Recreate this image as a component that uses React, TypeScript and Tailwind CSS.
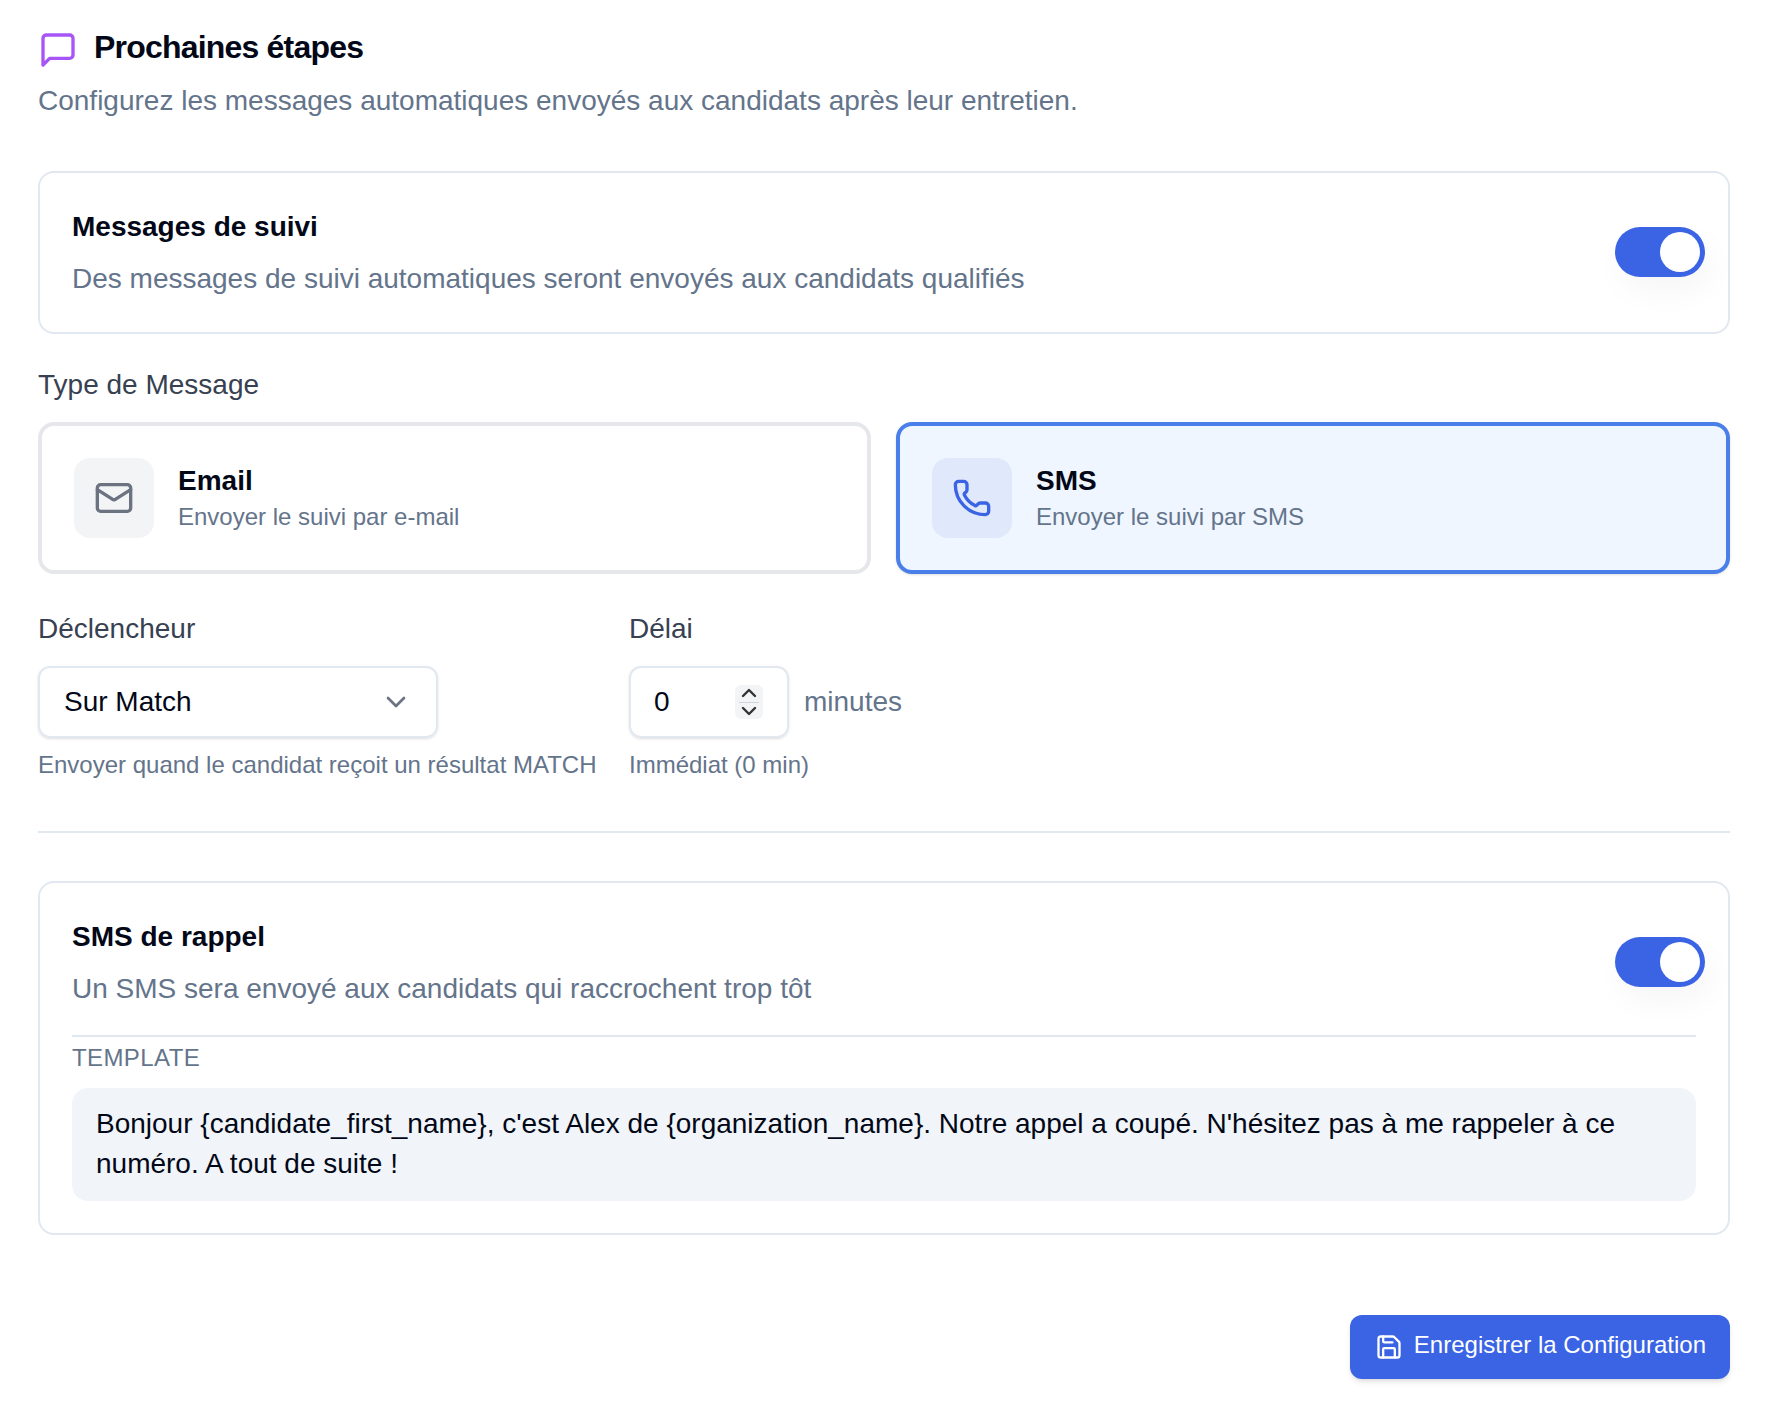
import { ChevronDown, ChevronUp, Mail, Phone, Save } from "lucide-react";

const Toggle = () => (
  <div className="flex h-[50px] w-[90px] -mr-[9px] shrink-0 items-center justify-end rounded-full bg-[#3b64e4] pr-[5px] shadow-[6px_14px_32px_rgba(0,0,0,0.04)]">
    <div className="h-[40px] w-[40px] rounded-full bg-white" />
  </div>
);

const App = () => {
  return (
    <div className="min-h-[1412px] bg-white pl-[38px] pr-[36px] pt-[27px] font-['Liberation_Sans',sans-serif] text-[#020817]">
      <div className="flex h-[40px] items-center gap-[16px]">
        <svg width="40" height="40" viewBox="0 0 24 24" fill="none" stroke="currentColor" strokeWidth="2" strokeLinecap="round" strokeLinejoin="round" className="mt-[6px] shrink-0 text-[#a855f7]">
          <path d="M21 15a2 2 0 0 1-2 2H7l-4 4V5a2 2 0 0 1 2-2h14a2 2 0 0 1 2 2z" />
        </svg>
        <h2 className="text-[32px] font-bold tracking-[-0.8px]">Prochaines étapes</h2>
      </div>
      <p className="mt-[14px] text-[28px] leading-[40px] text-[#64748b]">
        Configurez les messages automatiques envoyés aux candidats après leur entretien.
      </p>

      <div className="mt-[50px] flex items-center justify-between rounded-[16px] border-2 border-[#e2e8f0] px-[32px] pb-[33px] pt-[32px]">
        <div>
          <h3 className="text-[28px] font-bold leading-[44px]">Messages de suivi</h3>
          <p className="mt-[10px] text-[28px] leading-[40px] text-[#64748b]">
            Des messages de suivi automatiques seront envoyés aux candidats qualifiés
          </p>
        </div>
        <Toggle />
      </div>

      <div className="mt-[31px] text-[28px] leading-[40px] text-[#374151]">Type de Message</div>
      <div className="mt-[17px] grid grid-cols-[833px_1fr] gap-[25px]">
        <div className="flex items-center gap-[24px] rounded-[16px] border-4 border-[#e5e7eb] p-[32px]">
          <div className="flex h-[80px] w-[80px] items-center justify-center rounded-[16px] bg-[#f3f4f6]">
            <Mail size={40} className="text-[#6b7280]" />
          </div>
          <div>
            <div className="text-[28px] font-bold leading-[37px]">Email</div>
            <div className="text-[24px] leading-[35px] text-[#64748b]">Envoyer le suivi par e-mail</div>
          </div>
        </div>
        <div className="flex items-center gap-[24px] rounded-[16px] border-4 border-[#4a7fe9] bg-[#eff6ff] p-[32px] shadow-sm">
          <div className="flex h-[80px] w-[80px] items-center justify-center rounded-[16px] bg-[#dfe9fb]">
            <Phone size={40} className="text-[#3b64e4]" />
          </div>
          <div>
            <div className="text-[28px] font-bold leading-[37px]">SMS</div>
            <div className="text-[24px] leading-[35px] text-[#64748b]">Envoyer le suivi par SMS</div>
          </div>
        </div>
      </div>

      <div className="mt-[35px] flex gap-[31px]">
        <div className="w-[560px]">
          <div className="text-[28px] leading-[40px] text-[#374151]">Déclencheur</div>
          <div className="mt-[17px] flex h-[72px] w-[400px] items-center justify-between rounded-[12px] border-2 border-[#e2e8f0] pl-[24px] pr-[24px] text-[28px] shadow-sm">
            Sur Match
            <ChevronDown size={32} className="text-[#6b7280]" />
          </div>
          <p className="mt-[11px] text-[24px] leading-[32px] text-[#64748b]">
            Envoyer quand le candidat reçoit un résultat MATCH
          </p>
        </div>
        <div>
          <div className="text-[28px] leading-[40px] text-[#374151]">Délai</div>
          <div className="mt-[17px] flex items-center gap-[15px]">
            <div className="flex h-[72px] w-[160px] items-center justify-between rounded-[12px] border-2 border-[#e2e8f0] pl-[23px] pr-[24px] text-[28px] shadow-sm">
              0
              <div className="flex h-[34px] w-[28px] flex-col items-center justify-center rounded-[6px] bg-[#f3f4f6] text-[#333333]">
                <ChevronUp size={24} strokeWidth={2.4} className="-mb-[3.5px] shrink-0" />
                <div className="h-px w-[20px] shrink-0 bg-[#d1d5db]" />
                <ChevronDown size={24} strokeWidth={2.4} className="-mt-[3.5px] shrink-0" />
              </div>
            </div>
            <span className="text-[28px] text-[#64748b]">minutes</span>
          </div>
          <p className="mt-[11px] text-[24px] leading-[32px] text-[#64748b]">Immédiat (0 min)</p>
        </div>
      </div>

      <div className="mt-[50px] h-[2px] bg-[#e2e8f0]" />

      <div className="mt-[48px] rounded-[16px] border-2 border-[#e2e8f0] px-[32px] pb-[32px] pt-[32px]">
        <div className="flex items-center justify-between pb-[2px]">
          <div>
            <h3 className="text-[28px] font-bold leading-[44px]">SMS de rappel</h3>
            <p className="mt-[10px] text-[28px] leading-[40px] text-[#64748b]">
              Un SMS sera envoyé aux candidats qui raccrochent trop tôt
            </p>
          </div>
          <Toggle />
        </div>
        <div className="mt-[24px] border-t-2 border-[#e2e8f0] pt-[5px]">
          <div className="text-[24px] uppercase leading-[32px] tracking-[0.4px] text-[#64748b]">Template</div>
          <div className="mt-[14px] rounded-[16px] bg-[#f1f5f9] px-[24px] pb-[17px] pt-[16px] text-[28px] leading-[40px]">
            {"Bonjour {candidate_first_name}, c'est Alex de {organization_name}. Notre appel a coupé. N'hésitez pas à me rappeler à ce numéro. A tout de suite !"}
          </div>
        </div>
      </div>

      <div className="mt-[80px] flex justify-end">
        <button className="flex h-[64px] items-center gap-[11px] rounded-[12px] bg-[#3b64e4] pl-[25px] pr-[24px] text-[24px] font-medium text-white shadow-md">
          <Save size={28} />
          <span className="mb-[4px]">Enregistrer la Configuration</span>
        </button>
      </div>
    </div>
  );
};

export default App;
